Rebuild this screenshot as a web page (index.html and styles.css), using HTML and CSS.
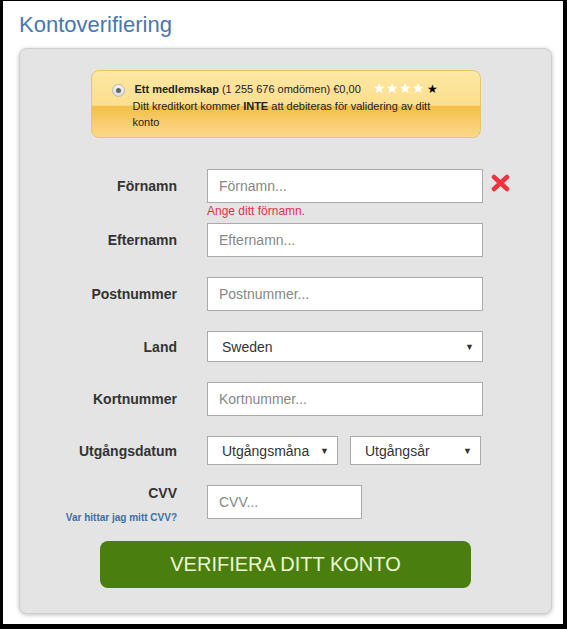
FILE: index.html
```html
<!DOCTYPE html>
<html lang="sv">
<head>
    <meta charset="UTF-8">
    <meta name="viewport" content="width=device-width, initial-scale=1.0">
    <title>Kontoverifiering</title>
    <link rel="stylesheet" href="styles.css">
</head>
<body>

    <div class="page">
        <h1>Kontoverifiering</h1>

        <div class="panel">
            <div class="offer">
                <span class="radio"><span class="dot"></span></span>
                <div class="offer-text">
                    <div class="offer-title"><b>Ett medlemskap</b> (1 255 676 omdömen) €0,00 <span class="stars"><span class="white">★★★★</span><span class="black">★</span></span></div>
                    <div>Ditt kreditkort kommer <b>INTE</b> att debiteras för validering av ditt konto</div>
                </div>
            </div>

            <form class="form">
                <div class="row has-error">
                    <label for="first_name">Förnamn</label>
                    <input type="text" id="first_name" placeholder="Förnamn...">
                    <svg class="error-icon" width="19" height="18" viewBox="0 0 19 18">
                        <path d="M3 3 L16 15 M16 3 L3 15" stroke="#ef3340" stroke-width="4.5" stroke-linecap="round"/>
                    </svg>
                    <span class="error-text">Ange ditt förnamn.</span>
                </div>
                <div class="row">
                    <label for="last_name">Efternamn</label>
                    <input type="text" id="last_name" placeholder="Efternamn...">
                </div>
                <div class="row">
                    <label for="zip">Postnummer</label>
                    <input type="text" id="zip" placeholder="Postnummer...">
                </div>
                <div class="row">
                    <label for="country">Land</label>
                    <div class="select land">
                        <span>Sweden</span><i>▼</i>
                    </div>
                </div>
                <div class="row">
                    <label for="card">Kortnummer</label>
                    <input type="text" id="card" placeholder="Kortnummer...">
                </div>
                <div class="row">
                    <label>Utgångsdatum</label>
                    <div class="select month"><span>Utgångsmåna</span><i>▼</i></div>
                    <div class="select year"><span>Utgångsår</span><i>▼</i></div>
                </div>
                <div class="row cvv-row">
                    <div class="cvv-label">
                        <label for="cvv">CVV</label>
                        <a href="#">Var hittar jag mitt CVV?</a>
                    </div>
                    <input type="text" id="cvv" class="cvv" placeholder="CVV...">
                </div>
                <button type="button">VERIFIERA DITT KONTO</button>
            </form>
        </div>
    </div>

</body>
</html>
```

FILE: styles.css
```css
* {
    margin: 0;
    padding: 0;
    box-sizing: border-box;
    font-family: "Liberation Sans", Arial, sans-serif;
}

body {
    background: #000;
    padding: 1px 4px 5px 3px;
}

.page {
    background: #fff;
    height: 623px;
    padding: 11px 11px 0 14px;
}

h1 {
    font-size: 22px;
    font-weight: normal;
    color: #4a76b0;
    line-height: 25px;
    margin-bottom: 11px;
    margin-left: 2px;
}

.panel {
    margin-left: 2px;
    background: #e4e4e4;
    border: 1px solid #cfcfcf;
    border-radius: 8px;
    box-shadow: 0 1px 4px rgba(0, 0, 0, 0.25);
    height: 566px;
    padding-top: 21px;
}

.offer {
    width: 390px;
    height: 68px;
    margin: 0 auto;
    border: 1px solid #e9c46c;
    border-radius: 8px;
    background: linear-gradient(#fde7a2, #fcdf8f 52%, #f4be47 53%, #fad98c);
    display: flex;
    padding: 10px 10px 0 20px;
    font-size: 11px;
    color: #222;
    line-height: 16px;
}

.radio {
    width: 13px;
    height: 13px;
    border-radius: 50%;
    border: 1px solid #b8b8b8;
    background: linear-gradient(#f2f2f2, #dcdcdc);
    display: flex;
    align-items: center;
    justify-content: center;
    margin-top: 3px;
    margin-right: 10px;
    flex-shrink: 0;
}

.radio .dot {
    width: 5px;
    height: 5px;
    border-radius: 50%;
    background: #666;
}

.offer-text {
    width: 300px;
    margin-left: -2px;
}

.offer-title {
    height: 17px;
    padding-left: 2px;
    white-space: nowrap;
}

.stars {
    margin-left: 9px;
    font-size: 14px;
    line-height: 14px;
    font-family: "DejaVu Sans", sans-serif;
}

.stars .white {
    color: #fff;
}

.stars .black {
    color: #000;
    font-size: 12px;
    margin-left: 2px;
}

.form {
    padding-top: 31px;
}

.row {
    display: flex;
    align-items: center;
    margin-bottom: 20px;
    position: relative;
}

.row label,
.cvv-label {
    width: 157px;
    text-align: right;
    margin-right: 30px;
    font-size: 14px;
    font-weight: bold;
    color: #333;
}

.row input {
    width: 276px;
    height: 34px;
    border: 1px solid #aaa;
    background: #fff;
    padding: 0 11px;
    font-size: 14px;
    color: #333;
    outline: none;
}

.row input::placeholder {
    color: #888;
}

.error-icon {
    margin-left: 8px;
    margin-top: -7px;
}

.error-text {
    position: absolute;
    left: 187px;
    top: 35px;
    font-size: 12px;
    color: #e2314a;
}

.select {
    height: 31px;
    border: 1px solid #aaa;
    background: #fff;
    display: flex;
    align-items: center;
    justify-content: space-between;
    padding: 0 8px 0 14px;
    font-size: 14px;
    color: #333;
}

.select i {
    font-style: normal;
    font-size: 9px;
}

.land {
    width: 276px;
}

.month {
    width: 131px;
    height: 29px;
    margin-right: 12px;
}

.year {
    width: 131px;
    height: 29px;
}

.cvv-row {
    align-items: flex-start;
    margin-bottom: 18px;
}

.cvv-label label {
    display: block;
    width: auto;
    margin: 0;
    line-height: 16px;
}

.cvv-label a {
    display: block;
    font-size: 10px;
    color: #3c6fa8;
    text-decoration: none;
    margin-top: 11px;
}

.row input.cvv {
    width: 155px;
}

button {
    display: block;
    width: 371px;
    height: 47px;
    margin: 0 auto;
    border: none;
    border-radius: 8px;
    background: #4a7e0f;
    color: #eff8cf;
    font-size: 20px;
    cursor: pointer;
}
```
